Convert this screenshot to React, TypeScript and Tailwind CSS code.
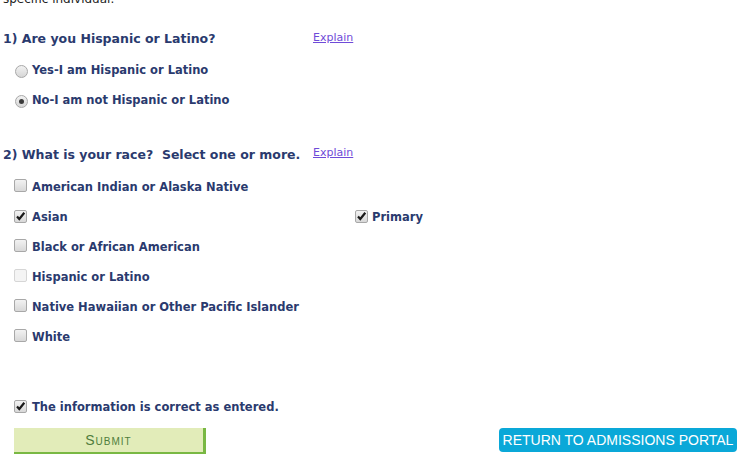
import { useState } from "react";

const navy = "text-[#2a3a6e]";
const labelFont = "font-['DejaVu_Sans',Verdana,sans-serif] text-[11.5px] font-bold";
const headFont = "font-['DejaVu_Sans',Verdana,sans-serif] text-[12.5px] font-bold";

function Box({ checked, disabled }: { checked?: boolean; disabled?: boolean }) {
  return (
    <span
      className={`relative inline-flex h-[13px] w-[13px] shrink-0 items-center justify-center rounded-[2px] border ${
        disabled
          ? "border-[#d6d6d6] bg-[#f4f4f4]"
          : "border-[#a8a8a8] bg-gradient-to-b from-[#f2f2f2] to-[#d8d8d8]"
      }`}
    >
      {checked && (
        <svg width="11" height="11" viewBox="0 0 11 11" className="-mt-[1px]">
          <path d="M2 5.5 L4.3 8 L9.3 1.8" fill="none" stroke="#1a1a1a" strokeWidth="2.2" />
        </svg>
      )}
    </span>
  );
}

function Radio({ checked }: { checked?: boolean }) {
  return (
    <span className="inline-flex h-[13px] w-[13px] shrink-0 items-center justify-center rounded-full border border-[#a8a8a8] bg-gradient-to-b from-[#f2f2f2] to-[#d6d6d6]">
      {checked && <span className="h-[5px] w-[5px] rounded-full bg-[#3a3a3a]" />}
    </span>
  );
}

function Explain() {
  return (
    <a href="#" className="font-['DejaVu_Sans',Verdana,sans-serif] text-[11px] text-[#6f4bd8] underline">
      Explain
    </a>
  );
}

const races = [
  { label: "American Indian or Alaska Native" },
  { label: "Asian", checked: true, primary: true },
  { label: "Black or African American" },
  { label: "Hispanic or Latino", disabled: true },
  { label: "Native Hawaiian or Other Pacific Islander" },
  { label: "White" },
];

export default function App() {
  const [hispanic] = useState("no");

  return (
    <div className="h-[457px] w-[743px] overflow-hidden bg-white">
      <div className="-mt-[9px] pl-[3px] font-['DejaVu_Sans',Verdana,sans-serif] text-[12px] leading-[16px] text-[#222]">
        specific individual.
      </div>

      <div className="mt-[22px] flex h-[20px] items-center">
        <h2 className={`w-[313px] pl-[3px] ${headFont} ${navy}`}>1) Are you Hispanic or Latino?</h2>
        <span className="-mt-[9px]">
          <Explain />
        </span>
      </div>

      <div className="mt-[7px]">
        {[
          { id: "yes", label: "Yes-I am Hispanic or Latino" },
          { id: "no", label: "No-I am not Hispanic or Latino" },
        ].map((r) => (
          <div key={r.id} className="flex h-[30px] items-center gap-[4px] pl-[15px]">
            <Radio checked={hispanic === r.id} />
            <span className={`${labelFont} ${navy}`}>{r.label}</span>
          </div>
        ))}
      </div>

      <div className="mt-[29px] flex h-[20px] items-center">
        <h2 className={`w-[313px] pl-[3px] ${headFont} ${navy}`}>
          2) What is your race?&nbsp; Select one or more.
        </h2>
        <span className="-mt-[11px]">
          <Explain />
        </span>
      </div>

      <div className="mt-[8px]">
        {races.map((r) => (
          <div key={r.label} className="flex h-[30px] items-center">
            <div className="flex w-[355px] items-center gap-[5px] pl-[14px]">
              <span className="-mt-[5px]">
                <Box checked={r.checked} disabled={r.disabled} />
              </span>
              <span className={`${labelFont} ${navy}`}>{r.label}</span>
            </div>
            {r.primary && (
              <div className="flex items-center gap-[4px]">
                <span className="-mt-[5px]">
                  <Box checked />
                </span>
                <span className={`${labelFont} ${navy}`}>Primary</span>
              </div>
            )}
          </div>
        ))}
      </div>

      <div className="mt-[40px] flex h-[30px] items-center gap-[5px] pl-[14px]">
        <span className="-mt-[5px]">
          <Box checked />
        </span>
        <span className={`${labelFont} ${navy}`}>The information is correct as entered.</span>
      </div>

      <div className="mt-[5px] flex items-start justify-between pl-[14px] pr-[6px]">
        <button className="h-[26px] w-[192px] border-r-[3px] border-b-[2px] border-[#79b843] bg-[#e2ecb9] font-['Liberation_Sans',Arial,sans-serif] text-[14px] tracking-[1px] text-[#4f7d3c] [font-variant:small-caps]">
          Submit
        </button>
        <button className="h-[24px] w-[238px] whitespace-nowrap rounded-[4px] bg-[#0aa8d8] font-['Liberation_Sans',Arial,sans-serif] text-[14px] text-white">
          RETURN TO ADMISSIONS PORTAL
        </button>
      </div>
    </div>
  );
}
